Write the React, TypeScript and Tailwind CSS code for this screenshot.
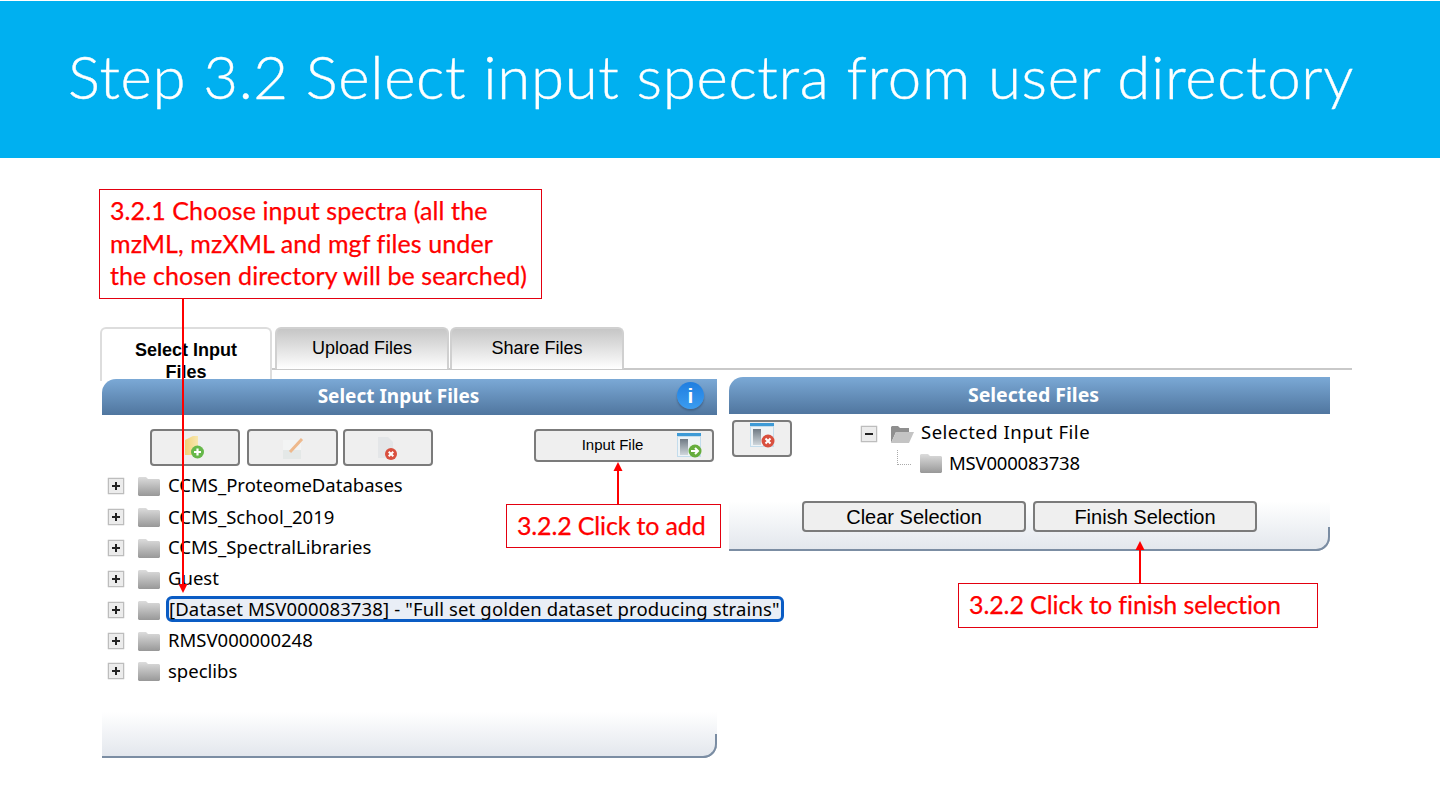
import { ReactNode } from "react";

const treeItems = [
  { label: "CCMS_ProteomeDatabases" },
  { label: "CCMS_School_2019" },
  { label: "CCMS_SpectralLibraries" },
  { label: "Guest" },
  { label: '[Dataset MSV000083738] - "Full set golden dataset producing strains"', active: true },
  { label: "RMSV000000248" },
  { label: "speclibs" },
];

function Folder({ open = false }: { open?: boolean }) {
  if (open) {
    return (
      <svg width="25" height="20" viewBox="0 0 25 20" className="shrink-0">
        <path d="M1 19V3l1-1h6l2 2h9v4H6L1 19z" fill="#8f8f8f" />
        <path d="M1 19 6 8h18l-5 11H1z" fill="#c4c4c4" />
      </svg>
    );
  }
  return (
    <svg width="22" height="20" viewBox="0 0 22 20" className="shrink-0">
      <defs>
        <linearGradient id="folderGrey" x1="0" y1="0" x2="0" y2="1">
          <stop offset="0" stopColor="#dcdcdc" />
          <stop offset="1" stopColor="#989898" />
        </linearGradient>
      </defs>
      <path d="M0 4V2l1-1h7l2 2h11l1 1v15l-1 1H1l-1-1V4z" fill="url(#folderGrey)" />
    </svg>
  );
}

function Toggle({ minus = false }: { minus?: boolean }) {
  return (
    <span className="w-[16px] h-[16px] shrink-0 flex items-center justify-center bg-[#ececec] border border-[#bdbdbd] shadow-[0_0_1px_#999]">
      <svg width="8" height="8" viewBox="0 0 8 8">
        <rect x="0" y="3" width="8" height="2" fill="#222" />
        {!minus && <rect x="3" y="0" width="2" height="8" fill="#222" />}
      </svg>
    </span>
  );
}

function ToolButton({ className, children }: { className: string; children?: ReactNode }) {
  return (
    <button
      className={`flex items-center justify-center bg-[#efefef] border-2 border-[#7b7b7b] rounded-[4px] text-black font-['Liberation_Sans',sans-serif] ${className}`}
    >
      {children}
    </button>
  );
}

function WindowIcon({ kind }: { kind: "add" | "remove" }) {
  return (
    <svg width="25" height="25" viewBox="0 0 25 25">
      <defs>
        <linearGradient id="winPane" x1="0" y1="0" x2="0" y2="1">
          <stop offset="0" stopColor="#6f7a84" />
          <stop offset="1" stopColor="#cfd6db" />
        </linearGradient>
      </defs>
      <rect x="0" y="0" width="24" height="24" fill="#c3dcec" />
      <rect x="0" y="0" width="24" height="3" fill="#3d9ad6" />
      <rect x="1" y="4" width="22" height="19" fill="#eef3f6" />
      <rect x="3" y="6" width="8" height="16" fill="url(#winPane)" />
      {kind === "add" ? (
        <>
          <circle cx="18" cy="18" r="6.5" fill="#66ad3d" />
          <path d="M14 18h6M18 15l3 3-3 3" stroke="#fff" strokeWidth="2" fill="none" />
        </>
      ) : (
        <>
          <circle cx="18" cy="18" r="6.5" fill="#d9503f" />
          <path d="M15.5 15.5l5 5M20.5 15.5l-5 5" stroke="#fff" strokeWidth="2" />
        </>
      )}
    </svg>
  );
}

function Callout({ className, children }: { className: string; children: ReactNode }) {
  return (
    <div
      className={`absolute z-20 bg-white border border-[#e3000f] text-[#ff0000] font-['Lato',sans-serif] text-[25px] whitespace-nowrap [-webkit-text-stroke:0.25px_#ff0000] ${className}`}
    >
      {children}
    </div>
  );
}

function Arrow({ className, height, up = false }: { className: string; height: number; up?: boolean }) {
  return (
    <svg className={`absolute z-20 ${className}`} width="10" height={height} viewBox={`0 0 10 ${height}`}>
      {up ? (
        <>
          <rect x="4" y="8" width="2" height={height - 8} fill="#ff0000" />
          <polygon points="5,0 9.5,9 0.5,9" fill="#ff0000" />
        </>
      ) : (
        <>
          <rect x="4" y="0" width="2" height={height - 8} fill="#ff0000" />
          <polygon points={`5,${height} 9.5,${height - 9} 0.5,${height - 9}`} fill="#ff0000" />
        </>
      )}
    </svg>
  );
}

function FooterCorner() {
  return (
    <span className="absolute right-0 -bottom-[2px] w-[20px] h-[24px] border-r-2 border-b-2 border-[#7b8da3] rounded-br-[14px]" />
  );
}

export default function App() {
  return (
    <div className="relative w-[1440px] h-[810px] overflow-hidden bg-white">
      <header className="h-[157px] mt-[1px] bg-[#00b0f0] pl-[68px] pt-[35px] text-white font-['Lato',sans-serif] font-light text-[60px] leading-[80px] tracking-[0.67px] [-webkit-text-stroke:0.4px_white]">
        Step 3.2 Select input spectra from user directory
      </header>

      <main className="pt-[169px] pl-[100px]">
        <nav className="flex h-[43px] w-[1252px] border-b-2 border-[#c9c9c9] font-['Liberation_Sans',sans-serif] text-[18px] text-black">
          <div className="relative z-10 w-[172px] h-[54px] shrink-0 overflow-hidden bg-white border-2 border-b-0 border-[#dddddd] rounded-t-[6px] text-center font-bold leading-[22px] pt-[10px]">
            Select Input
            <br />
            Files
          </div>
          <div className="ml-[3px] w-[174px] h-[42px] flex items-center justify-center pb-[2px] bg-gradient-to-b from-[#c6c6c6] to-white border-2 border-b-0 border-[#d0d0d0] rounded-t-[6px]">
            Upload Files
          </div>
          <div className="w-[174px] ml-[1px] h-[42px] flex items-center justify-center pb-[2px] bg-gradient-to-b from-[#c6c6c6] to-white border-2 border-b-0 border-[#d0d0d0] rounded-t-[6px]">
            Share Files
          </div>
        </nav>

        <div className="flex items-start gap-[12px] pl-[2px] pt-[7px] font-['Noto_Sans',sans-serif]">
          {/* left panel */}
          <section className="relative w-[615px] h-[379px] mt-[2px]">
            <div className="relative z-10 h-[36px] flex items-center justify-center pr-[22px] pb-[2px] bg-gradient-to-b from-[#7ba9d6] to-[#50769f] rounded-tl-[14px] text-white font-bold text-[19px]">
              Select Input Files
              <span className="absolute right-[13px] top-[3px] w-[27px] h-[27px] rounded-full bg-gradient-to-b from-[#1f7ee0] to-[#3b9cf0] shadow-[0_2px_2px_#44658a] flex items-center justify-center font-['Liberation_Sans',sans-serif] text-[21px] font-bold">
                i
              </span>
            </div>

            <div className="flex items-start h-[36px] mt-[14px] pl-[48px]">
              <ToolButton className="w-[90px] h-[37px]">
                <svg width="24" height="25" viewBox="0 0 24 25">
                  <defs>
                    <linearGradient id="folderYellow" x1="0" y1="0" x2="1" y2="0">
                      <stop offset="0" stopColor="#f0d278" />
                      <stop offset="1" stopColor="#f8e7ae" />
                    </linearGradient>
                  </defs>
                  <path d="M2 5l8-4h5v19H2z" fill="url(#folderYellow)" />
                  <circle cx="14.5" cy="17" r="6.5" fill="#66b84a" />
                  <path d="M14.5 13.5v7M11 17h7" stroke="#fff" strokeWidth="2.2" />
                </svg>
              </ToolButton>
              <ToolButton className="ml-[7px] w-[91px] h-[37px]">
                <svg width="24" height="24" viewBox="0 0 24 24">
                  <rect x="2" y="4" width="18" height="19" fill="#e4e8e7" />
                  <rect x="2" y="4" width="18" height="10" fill="#f3f4f4" />
                  <path d="M9 16 21 3" stroke="#eeb98d" strokeWidth="3" />
                </svg>
              </ToolButton>
              <ToolButton className="ml-[5px] w-[90px] h-[37px]">
                <svg width="24" height="24" viewBox="0 0 24 24">
                  <path d="M2 1h10l5 5v16H2z" fill="#e4e6e8" />
                  <circle cx="15" cy="18" r="6" fill="#d9503f" />
                  <path d="M12.7 15.7l4.6 4.6M17.3 15.7l-4.6 4.6" stroke="#fff" strokeWidth="2" />
                </svg>
              </ToolButton>
              <ToolButton className="ml-[101px] w-[180px] h-[33px] text-[15px] relative">
                <span className="mr-[23px]">Input File</span>
                <span className="absolute right-[10px] top-[2px]">
                  <WindowIcon kind="add" />
                </span>
              </ToolButton>
            </div>

            <ul className="mt-[5px] pl-[6px] text-[18.5px] text-black">
              {treeItems.map((item, i) => (
                <li key={item.label} className={`flex items-center ${i === 0 ? "h-[32px]" : "h-[30.8px]"}`}>
                  <Toggle />
                  <span className="ml-[14px]">
                    <Folder />
                  </span>
                  <span
                    className={
                      item.active
                        ? "ml-[6px] -mt-[2px] h-[26px] pr-[1px] flex items-center whitespace-nowrap border-[3px] border-[#0a5cc4] rounded-[6px] bg-[#e9eef6] tracking-[0.14px]"
                        : "ml-[8px] -mt-[2px] whitespace-nowrap"
                    }
                  >
                    {item.label}
                  </span>
                </li>
              ))}
            </ul>

            <div className="absolute left-0 right-0 bottom-0 h-[46px] bg-gradient-to-b from-white to-[#e3e7ed] border-b-2 border-[#7b8da3] rounded-br-[14px]">
              <FooterCorner />
            </div>
          </section>

          {/* right panel */}
          <section className="w-[601px] h-[174px]">
            <div className="h-[37px] flex items-center justify-center pl-[8px] pb-[2px] bg-gradient-to-b from-[#7ba9d6] to-[#50769f] rounded-tl-[14px] text-white font-bold text-[19.5px]">
              Selected Files
            </div>
            <div className="relative h-[87px]">
              <ToolButton className="absolute left-[3px] top-[6px] w-[60px] h-[37px] !items-start pt-[1px]">
                <WindowIcon kind="remove" />
              </ToolButton>
              <div className="pl-[132px] pt-[6px] text-[18.5px] text-black">
                <div className="flex items-center h-[28px]">
                  <Toggle minus />
                  <span className="ml-[13px]">
                    <Folder open />
                  </span>
                  <span className="ml-[6px] -mt-[4px] whitespace-nowrap tracking-[0.5px]">Selected Input File</span>
                </div>
                <div className="flex items-center h-[30px] pl-[36px]">
                  <span className="w-[14px] h-[15px] -mt-[12px] border-l border-b border-dotted border-[#aaa] shrink-0" />
                  <span className="ml-[9px]">
                    <Folder />
                  </span>
                  <span className="ml-[7px] -mt-[1px] whitespace-nowrap tracking-[-0.2px]">MSV000083738</span>
                </div>
              </div>
            </div>
            <div className="relative h-[50px] flex items-start justify-start gap-[7px] pl-[73px] bg-gradient-to-b from-white to-[#e3e7ed] border-b-2 border-[#7b8da3] rounded-br-[14px]">
              <ToolButton className="w-[224px] h-[31px] text-[20px] leading-none">Clear Selection</ToolButton>
              <ToolButton className="w-[224px] h-[31px] text-[20px] leading-none">Finish Selection</ToolButton>
              <FooterCorner />
            </div>
          </section>
        </div>
      </main>

      {/* annotations */}
      <Callout className="left-[99px] top-[189px] w-[443px] h-[110px] pl-[10px] pt-[4px] leading-[32.5px] tracking-[0.1px]">
        3.2.1 Choose input spectra (all the
        <br />
        mzML, mzXML and mgf files under
        <br />
        the chosen directory will be searched)
      </Callout>
      <Callout className="left-[506px] top-[504px] w-[215px] h-[44px] pl-[10px] leading-[40px] tracking-[-0.15px]">
        3.2.2 Click to add
      </Callout>
      <Callout className="left-[958px] top-[583px] w-[360px] h-[45px] pl-[10px] leading-[41px] tracking-[-0.1px]">
        3.2.2 Click to finish selection
      </Callout>

      <Arrow className="left-[178px] top-[298px]" height={295} />
      <Arrow up className="left-[613px] top-[462px]" height={42} />
      <Arrow up className="left-[1135px] top-[541px]" height={42} />
    </div>
  );
}
